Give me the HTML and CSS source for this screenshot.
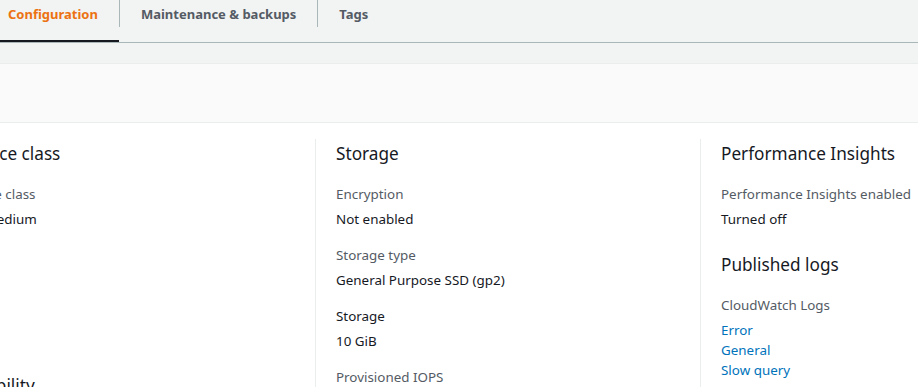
FILE: index.html
```html
<!DOCTYPE html>
<html lang="en">
<head>
<meta charset="utf-8">
<title>Configuration</title>
<link rel="stylesheet" href="styles.css">
</head>
<body>
<div class="page">
  <nav class="tabs">
    <div class="tab active"><span class="tab-label">Configuration</span></div>
    <div class="tab"><span class="tab-label">Maintenance &amp; backups</span></div>
    <div class="tab"><span class="tab-label">Tags</span></div>
  </nav>
  <div class="gap"></div>
  <div class="toolbar"></div>
  <div class="columns">
    <section class="col">
      <h2 class="heading">Instance class</h2>
      <div class="field">
        <div class="label">Instance class</div>
        <div class="value">db.t2.medium</div>
      </div>
      <h2 class="heading later">Availability</h2>
    </section>
    <section class="col">
      <h2 class="heading">Storage</h2>
      <div class="field">
        <div class="label">Encryption</div>
        <div class="value">Not enabled</div>
      </div>
      <div class="field">
        <div class="label">Storage type</div>
        <div class="value">General Purpose SSD (gp2)</div>
      </div>
      <div class="field">
        <div class="label dark">Storage</div>
        <div class="value">10 GiB</div>
      </div>
      <div class="field">
        <div class="label">Provisioned IOPS</div>
        <div class="value">-</div>
      </div>
    </section>
    <section class="col">
      <h2 class="heading">Performance Insights</h2>
      <div class="field">
        <div class="label">Performance Insights enabled</div>
        <div class="value">Turned off</div>
      </div>
      <h2 class="heading sub">Published logs</h2>
      <div class="field">
        <div class="label">CloudWatch Logs</div>
        <a class="link" href="#">Error</a>
        <a class="link" href="#">General</a>
        <a class="link" href="#">Slow query</a>
      </div>
    </section>
  </div>
</div>
</body>
</html>
```

FILE: styles.css
```css
* { box-sizing: border-box; }
html, body { margin: 0; padding: 0; overflow: hidden; }
body {
  font-family: "Noto Sans", "Open Sans", sans-serif;
  color: #16191f;
  background: #ffffff;
  width: 918px;
  height: 387px;
}
.page { width: 918px; }

.tabs {
  display: flex;
  align-items: flex-start;
  height: 43px;
  background: #f2f3f3;
  border-bottom: 1px solid #aab7b8;
  margin-left: -13px;
}
.tab {
  height: 42px;
  display: flex;
  align-items: flex-start;
}
.tab + .tab .tab-label { border-left: 1px solid #aab7b8; }
.tab-label {
  display: block;
  height: 27px;
  padding: 4px 21px 0 21px;
  font-size: 13px;
  font-weight: 700;
  line-height: 20px;
  color: #545b64;
}
.tab.active { border-bottom: 2px solid #16191f; }
.tab.active .tab-label { color: #ec7211; }

.gap {
  height: 21px;
  background: #f2f3f3;
  border-bottom: 1px solid #eaeded;
}
.toolbar {
  height: 59px;
  background: #fafafa;
  border-bottom: 1px solid #eaeded;
}

.columns {
  display: grid;
  grid-template-columns: 387px 385px 385px;
  margin-left: -72px;
  padding-top: 16px;
}
.col {
  padding: 0 20px;
  border-left: 1px solid #eaeded;
}
.col:first-child { border-left: none; }

.heading {
  margin: 0 0 19px;
  font-size: 17.2px;
  font-weight: 400;
  line-height: 22px;
  padding-top: 4px;
}
.heading.sub { margin-top: 21px; }
.heading.later { margin-top: 142px; }

.field { margin-bottom: 16px; }
.label {
  font-size: 13.4px;
  line-height: 20px;
  color: #545b64;
  margin-bottom: 5px;
}
.label.dark { color: #16191f; }
.value {
  font-size: 13.4px;
  line-height: 20px;
  color: #16191f;
}
.link {
  display: block;
  font-size: 13.4px;
  line-height: 20px;
  color: #0073bb;
  text-decoration: none;
}
```
